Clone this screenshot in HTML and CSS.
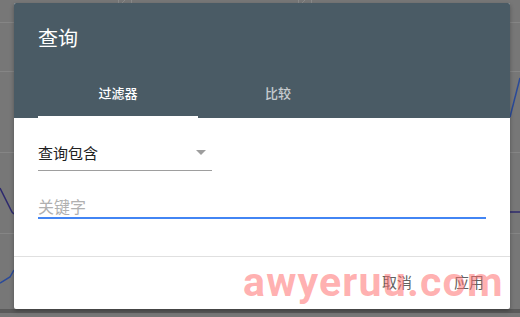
FILE: index.html
```html
<!DOCTYPE html>
<html lang="zh">
<head>
<meta charset="utf-8">
<link rel="stylesheet" href="styles.css">
</head>
<body>
<svg class="backdrop" width="520" height="317" viewBox="0 0 520 317">
  <g stroke="#858585" stroke-width="1">
    <line x1="0" y1="22.5" x2="520" y2="22.5"/>
    <line x1="0" y1="71.5" x2="520" y2="71.5"/>
    <line x1="0" y1="152.5" x2="520" y2="152.5"/>
    <line x1="0" y1="233.5" x2="520" y2="233.5"/>
  </g>
  <g stroke="#8a8a8a" stroke-width="1" fill="none">
    <line x1="118.5" y1="0" x2="118.5" y2="3"/>
    <line x1="122" y1="3" x2="125" y2="0"/>
    <line x1="131.5" y1="0" x2="131.5" y2="3"/>
    <line x1="298.5" y1="0" x2="298.5" y2="3"/>
    <line x1="302" y1="3" x2="305" y2="0"/>
    <line x1="311.5" y1="0" x2="311.5" y2="3"/>
  </g>
  <polyline points="0,188 12,212 14,214" stroke="#2e2a6e" stroke-width="1.5" fill="none"/>
  <polyline points="0,283 10,277 14,270" stroke="#2a4a9a" stroke-width="1.5" fill="none"/>
  <polyline points="510,117 520,78" stroke="#2a4a9a" stroke-width="1.5" fill="none"/>
  <line x1="510" y1="212" x2="520" y2="212" stroke="#2e2a6e" stroke-width="1.5"/>
  <rect x="0" y="309" width="520" height="4" fill="#5a5a5a"/>
</svg>

<div class="dialog">
  <div class="dialog-header">
    <div class="dialog-title">查询</div>
    <div class="tabs">
      <div class="tab tab-active">过滤器</div>
      <div class="tab">比较</div>
    </div>
  </div>
  <div class="dialog-body">
    <div class="select">
      <span class="select-label">查询包含</span>
      <span class="select-arrow"></span>
    </div>
    <div class="input">
      <span class="placeholder">关键字</span>
    </div>
  </div>
  <div class="dialog-footer">
    <span class="btn">取消</span>
    <span class="btn">应用</span>
  </div>
</div>

<div class="watermark">awyeruu.com</div>
</body>
</html>
```

FILE: styles.css
```css
html, body {
  margin: 0;
  padding: 0;
}
body {
  width: 520px;
  height: 317px;
  background: #777777;
  overflow: hidden;
  position: relative;
  font-family: "Noto Sans CJK SC", "Noto Sans", sans-serif;
}
.backdrop {
  position: absolute;
  left: 0;
  top: 0;
}
.dialog {
  position: absolute;
  left: 14px;
  top: 3px;
  width: 496px;
  height: 306px;
  background: #ffffff;
  border-radius: 2px;
  overflow: hidden;
  display: flex;
  flex-direction: column;
  box-shadow: 0 2px 4px rgba(0, 0, 0, 0.3);
}
.dialog-header {
  background: #4a5b65;
  height: 115px;
  display: flex;
  flex-direction: column;
  justify-content: space-between;
}
.dialog-title {
  color: #ffffff;
  font-size: 20px;
  line-height: 28px;
  padding: 21px 0 0 24px;
}
.tabs {
  display: flex;
  padding-left: 24px;
}
.tab {
  width: 160px;
  height: 48px;
  line-height: 46px;
  text-align: center;
  font-size: 13px;
  font-weight: 500;
  color: rgba(255, 255, 255, 0.7);
  box-sizing: border-box;
  border-bottom: 2px solid transparent;
}
.tab-active {
  color: #ffffff;
  border-bottom-color: #ffffff;
}
.dialog-body {
  height: 138px;
  box-sizing: border-box;
  padding: 18px 24px 0 24px;
  display: flex;
  flex-direction: column;
  align-items: flex-start;
}
.select {
  width: 174px;
  height: 35px;
  box-sizing: border-box;
  border-bottom: 1px solid #9e9e9e;
  display: flex;
  align-items: center;
  justify-content: space-between;
}
.select-label {
  font-size: 15px;
  color: #212121;
  line-height: 34px;
}
.select-arrow {
  width: 0;
  height: 0;
  border-left: 5px solid transparent;
  border-right: 5px solid transparent;
  border-top: 5px solid #9e9e9e;
  margin-right: 6px;
  margin-top: -1px;
}
.input {
  margin-top: 24px;
  width: 448px;
  height: 24px;
  box-sizing: border-box;
  border-bottom: 2px solid #4285f4;
  display: flex;
  align-items: center;
}
.placeholder {
  font-size: 16px;
  line-height: 22px;
  color: #b0b0b0;
}
.dialog-footer {
  flex: 1;
  border-top: 1px solid #e0e0e0;
  display: flex;
  justify-content: flex-end;
  align-items: center;
  gap: 22px;
  padding: 0 16px 2px 0;
}
.btn {
  font-size: 15px;
  color: #616161;
  padding: 0 10px;
  line-height: 36px;
}
.watermark {
  position: absolute;
  left: 243px;
  top: 258px;
  font-family: "Roboto", sans-serif;
  font-weight: 700;
  font-size: 41px;
  letter-spacing: 1.2px;
  color: rgba(255, 110, 110, 0.55);
  pointer-events: none;
}
```
